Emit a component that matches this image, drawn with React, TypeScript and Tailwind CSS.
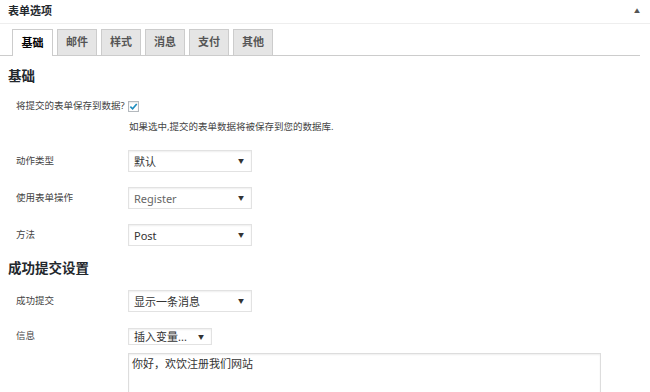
import React from "react";

const font = { fontFamily: '"Noto Sans", "Noto Sans CJK SC", sans-serif' };

function Select({ value, w = "w-[124px]", h = "h-[22px]", muted = false }: { value: string; w?: string; h?: string; muted?: boolean }) {
  return (
    <div
      className={`${w} ${h} flex items-center justify-between border border-[#e2e2e2] bg-white pl-[5px] pr-[7px] shadow-[inset_0_1px_2px_rgba(0,0,0,0.07)]`}
    >
      <span className={`text-[11px] leading-none ${muted ? "text-[#666]" : "text-[#333]"}`}>{value}</span>
      <span className="text-[6px] leading-none text-[#333]">▼</span>
    </div>
  );
}

function Row({ label, children, h }: { label: string; children: React.ReactNode; h: string }) {
  return (
    <div className={`flex items-center ${h}`}>
      <div className="w-[128px] shrink-0 whitespace-nowrap pl-[16px] text-[9.5px] text-[#444]">{label}</div>
      {children}
    </div>
  );
}

export default function App() {
  const tabs = ["基础", "邮件", "样式", "消息", "支付", "其他"];
  return (
    <div className="w-[650px] h-[392px] overflow-hidden bg-white text-[#333]" style={font}>
      <div className="flex h-[24px] items-center justify-between border-b border-[#eeeeee] pl-[8px] pr-[10px]">
        <span className="text-[11px] font-bold text-[#23282d]">表单选项</span>
        <span className="text-[6px] text-[#555]">▲</span>
      </div>
      <div className="mt-[6px] mr-[10px] flex h-[26px] items-end gap-[4px] border-b border-[#cccccc] pl-[12px]">
        {tabs.map((t, i) => (
          <div
            key={t}
            className={
              i === 0
                ? "-mb-px flex h-[27px] w-[41px] items-center justify-center border border-b-0 border-[#cccccc] bg-white text-[11px] font-semibold text-[#000]"
                : "flex h-[26px] w-[40px] items-center justify-center border border-b-0 border-[#cccccc] bg-[#e5e5e5] text-[11px] font-semibold text-[#555]"
            }
          >
            {t}
          </div>
        ))}
      </div>
      <div className="flex h-[38px] items-center pl-[8px] pt-[2px] text-[13.5px] font-bold text-[#23282d]">基础</div>
      <Row label="将提交的表单保存到数据?" h="h-[23px] mt-[1px]">
        <div className="flex h-[11px] w-[11px] items-center justify-center border border-[#b4b9be] bg-white shadow-[inset_0_1px_2px_rgba(0,0,0,0.1)]">
          <svg width="9" height="9" viewBox="0 0 10 10">
            <path d="M1.5 5.2 L4 7.6 L8.6 2.2" fill="none" stroke="#1e8cbe" strokeWidth="1.8" />
          </svg>
        </div>
      </Row>
      <div className="flex h-[18px] items-center pl-[129px] text-[9.5px] text-[#444]">如果选中,提交的表单数据将被保存到您的数据库.</div>
      <div className="mt-[14px] flex flex-col gap-[15px]">
        <Row label="动作类型" h="h-[22px]">
          <Select value="默认" />
        </Row>
        <Row label="使用表单操作" h="h-[22px]">
          <Select value="Register" muted />
        </Row>
        <Row label="方法" h="h-[22px]">
          <Select value="Post" />
        </Row>
      </div>
      <div className="flex h-[44px] items-center pl-[8px] text-[13.5px] font-bold text-[#23282d]">成功提交设置</div>
      <Row label="成功提交" h="h-[22px]">
        <Select value="显示一条消息" />
      </Row>
      <div className="mt-[16px]">
        <Row label="信息" h="h-[17px]">
          <Select value="插入变量..." w="w-[84px]" h="h-[17px]" />
        </Row>
      </div>
      <div className="ml-[128px] mt-[8px] h-[60px] w-[473px] border border-[#dddddd] px-[3px] pt-[2px] text-[11px] text-[#333] shadow-[inset_0_1px_2px_rgba(0,0,0,0.07)]">
        你好，欢饮注册我们网站
      </div>
    </div>
  );
}
